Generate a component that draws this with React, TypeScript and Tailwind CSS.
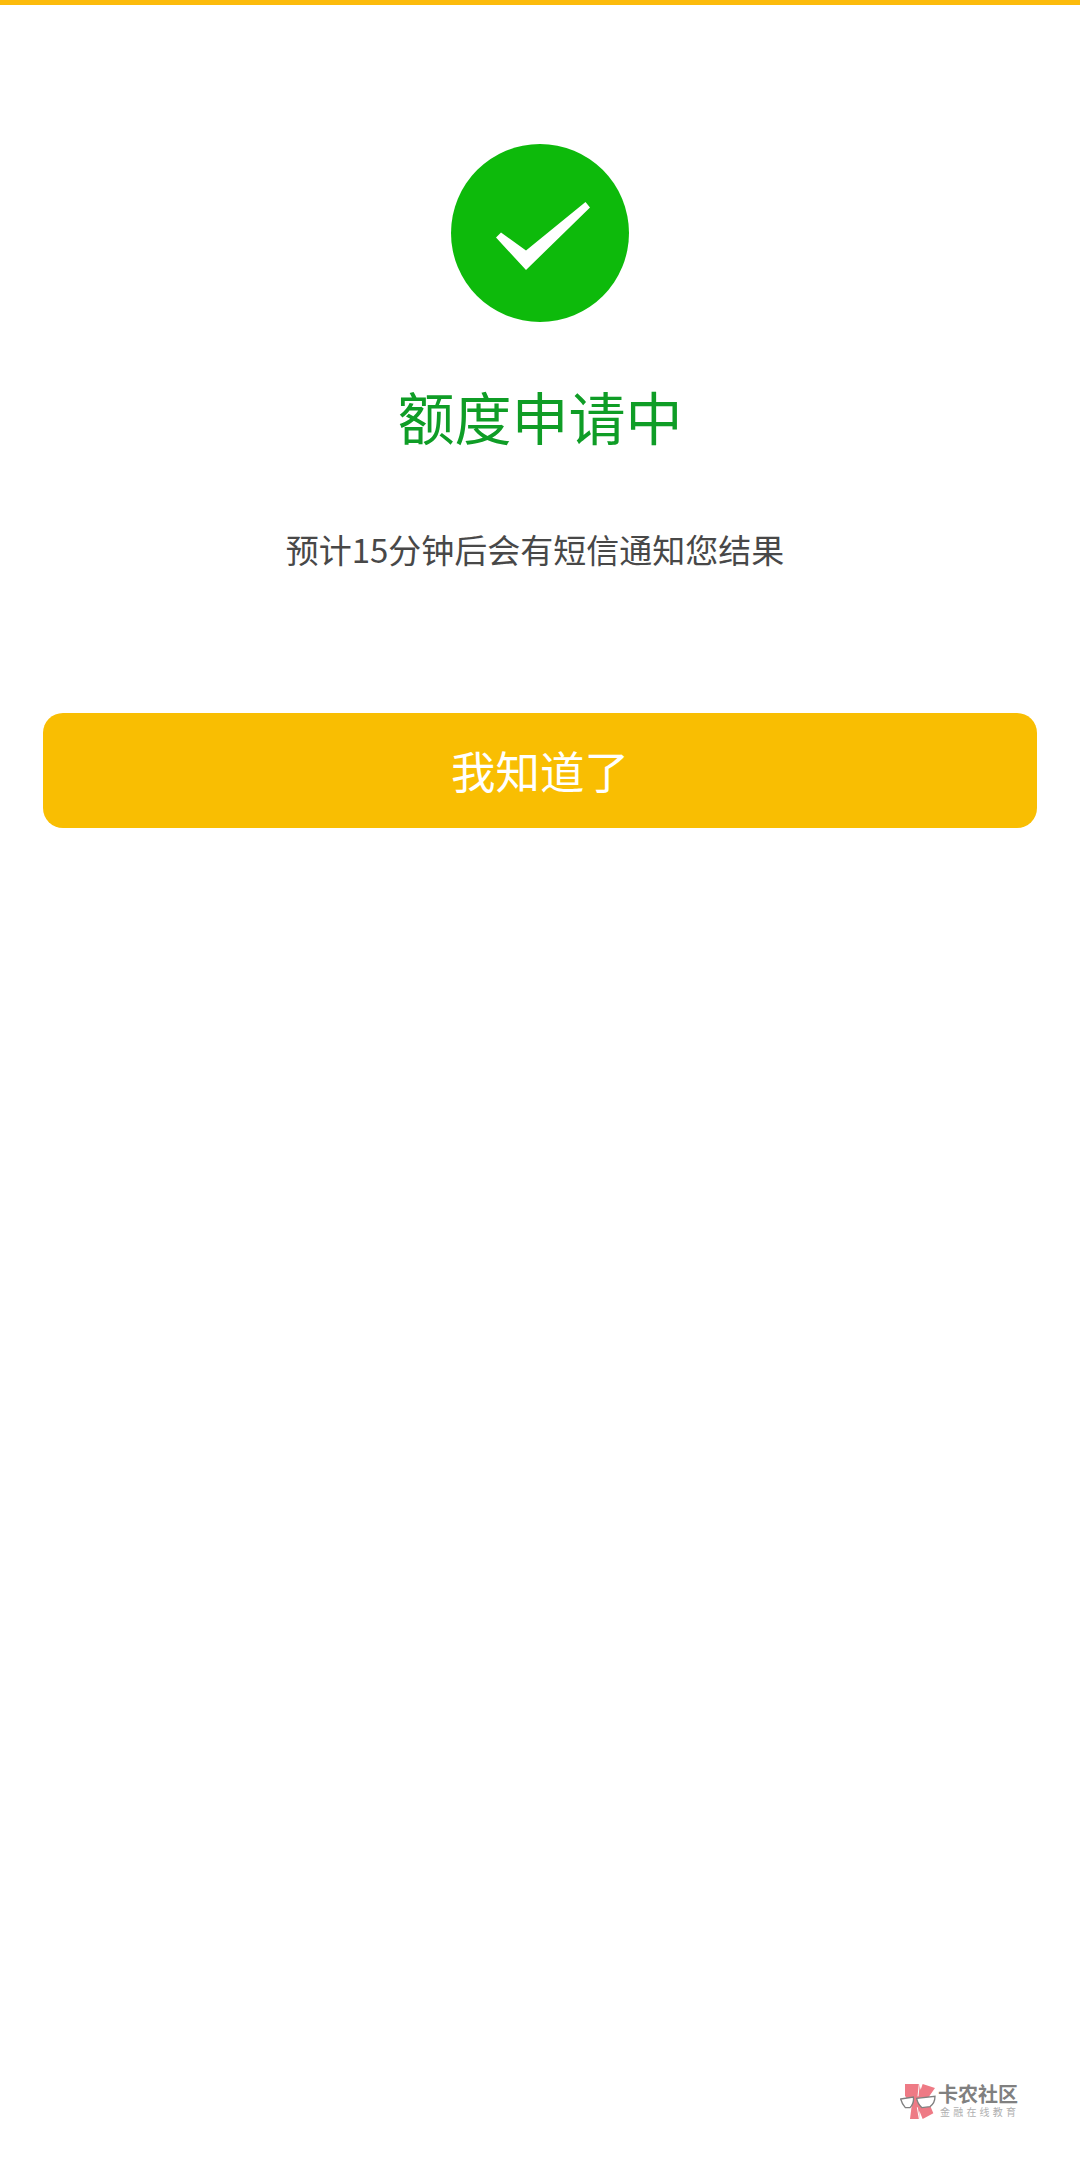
import React from "react";

const cjk = "font-['Noto_Sans_CJK_SC','Noto_Sans',sans-serif]";

function CheckBadge() {
    return (
        <svg width="178" height="178" viewBox="0 0 178 178" className="block">
            <circle cx="89" cy="89" r="89" fill="#0dba0b" />
            <path d="M45 93.5 L50 88.5 L75 106.5 L134.5 58 L139 63.5 L75 126 Z" fill="#ffffff" />
        </svg>
    );
}

function Watermark() {
    return (
        <div className="absolute left-[900px] top-[2083px] flex items-start">
            <svg width="36" height="38" viewBox="60 72 108 114" className="block">
                <path d="M75 75 L118 75 L122 92 L128 75 L165 87 L142 120 L160 163 L128 180 L118 155 L118 180 L90 180 L95 140 L75 110 Z" fill="#ee7a85" />
                <path d="M118 75 L114 112 M118 180 L112 145" stroke="#ffffff" strokeWidth="3" fill="none" />
                <path d="M62 120 L100 114 Q103 132 90 146 L76 146 Q66 135 62 120 Z" fill="#ffffff" stroke="#808080" strokeWidth="4" />
                <path d="M110 118 L165 112 Q165 133 150 143 L126 146 Q113 135 110 118 Z" fill="#ffffff" stroke="#808080" strokeWidth="4" />
            </svg>
            <div className={`ml-[2px] flex flex-col ${cjk}`}>
                <span className="text-[20px] leading-[22px] font-bold text-[#808080] whitespace-nowrap">卡农社区</span>
                <span className="ml-[2px] text-[10px] leading-[14px] text-[#b0b0b0] whitespace-nowrap tracking-[3.2px]">金融在线教育</span>
            </div>
        </div>
    );
}

function App() {
    return (
        <div className={`relative h-[2171px] w-full bg-white overflow-hidden flex flex-col items-center ${cjk}`}>
            <div className="h-[5px] w-full bg-[#fcbb0c]" />
            <div className="mt-[139px]">
                <CheckBadge />
            </div>
            <h1 className="mt-[53px] text-[57px] leading-[80px] font-normal text-[#0f9d26]">额度申请中</h1>
            <p className="mt-[69px] pr-[10px] text-[33px] leading-[50px] text-[#484848]">预计15分钟后会有短信通知您结果</p>
            <div className="w-full px-[43px] mt-[139px]">
                <button type="button" className="h-[115px] w-full rounded-[20px] bg-[#f9be02] text-white text-[44.5px]">
                    我知道了
                </button>
            </div>
            <Watermark />
        </div>
    );
}

export default App;
